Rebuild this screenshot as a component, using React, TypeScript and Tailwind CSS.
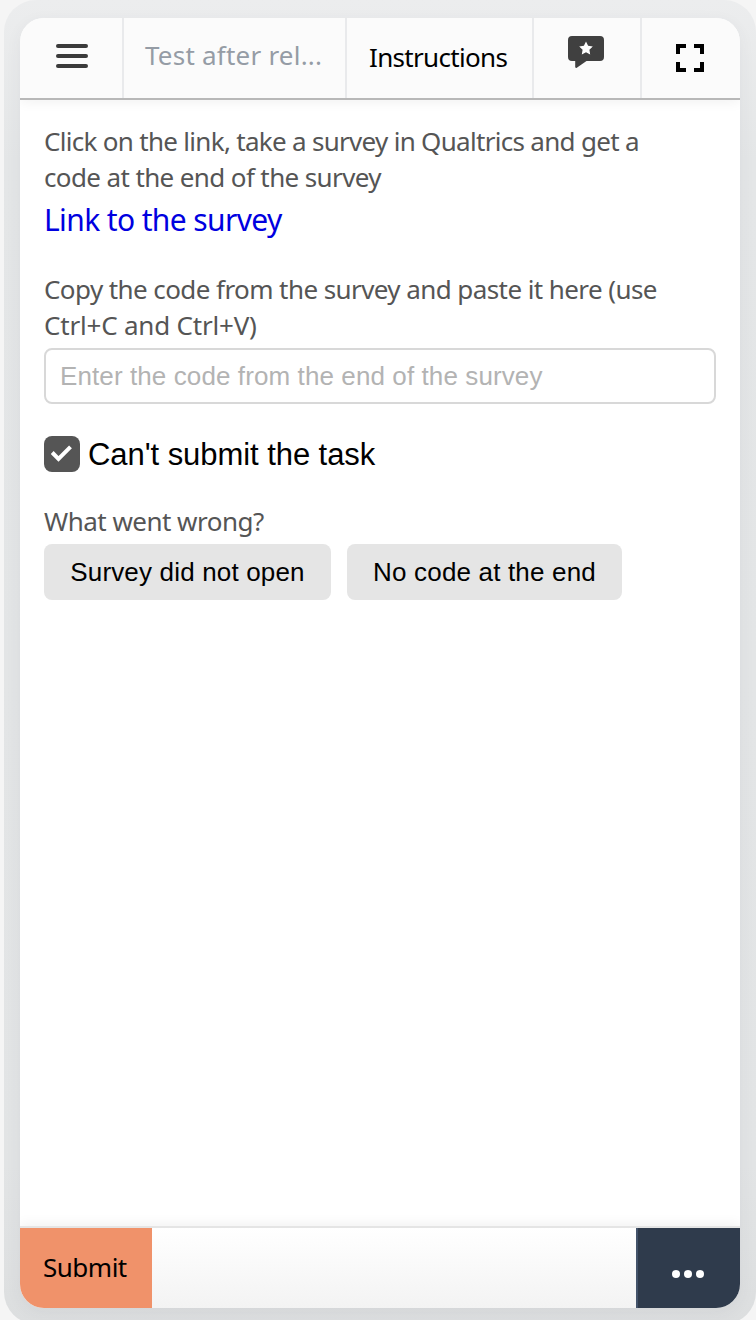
import React from "react";

function MenuIcon() {
  return (
    <svg width="32" height="24" viewBox="0 0 32 24" fill="#3b3b3b">
      <rect width="32" height="4" rx="2" />
      <rect y="10" width="32" height="4" rx="2" />
      <rect y="20" width="32" height="4" rx="2" />
    </svg>
  );
}

function FeedbackIcon() {
  return (
    <svg width="36" height="32" viewBox="0 0 36 32" fill="#404040">
      <path d="M4 0h28a4 4 0 0 1 4 4v17a4 4 0 0 1-4 4H18.500L8.800 31.700a1 1 0 0 1-1.600-.8V25H4a4 4 0 0 1-4-4V4a4 4 0 0 1 4-4z" />
      <path
        fill="#fff"
        d="M18 5.400l2.100 4.400 4.700.7-3.400 3.300.8 4.700-4.200-2.200-4.200 2.200.8-4.700-3.400-3.300 4.700-.7z"
      />
    </svg>
  );
}

function FullscreenIcon() {
  return (
    <svg width="28" height="28" viewBox="0 0 28 28" fill="none" stroke="#000" strokeWidth="4">
      <path d="M2 10V2h8M18 2h8v8M26 18v8h-8M10 26H2v-8" />
    </svg>
  );
}

const sans = "font-['Noto_Sans','Open_Sans',sans-serif]";
const arial = "font-['Liberation_Sans',Arial,sans-serif]";

export default function App() {
  return (
    <div className={`h-[1320px] w-[756px] overflow-hidden bg-[#f5f5f5] pl-1 ${sans}`}>
      <div className="h-[1324px] w-[752px] rounded-[32px] bg-[linear-gradient(#ecedee,#e4e6e7_12%,#e2e4e5_88%,#dcdedf)] pl-4 pt-[18px]">
        <div className="flex h-[1290px] w-[720px] flex-col overflow-hidden rounded-[24px] bg-white shadow-[0_4px_16px_rgba(60,70,80,0.06)]">
          <header className="relative flex h-[82px] shrink-0 border-b-2 border-[#b8b8b8] bg-[#fbfbfb] shadow-[0_2px_12px_rgba(0,0,0,0.06)]">
            <button className="flex w-[104px] items-start justify-center border-r-2 border-[#e9eaec] pl-[2px] pt-[26px]">
              <MenuIcon />
            </button>
            <div className="w-[223px] whitespace-nowrap border-r-2 border-[#e9eaec] pl-[21px] pt-[19px] text-[26px] leading-[36px] tracking-[0.22px] text-[#959ca5]">
              Test after rel...
            </div>
            <button className="flex w-[187px] items-start border-r-2 border-[#e9eaec] pl-[22px] pt-[21px] text-[26px] leading-[36px] tracking-[-0.68px] text-black">
              Instructions
            </button>
            <button className="flex w-[108px] items-start justify-center border-r-2 border-[#e9eaec] pr-[2px] pt-[18px]">
              <FeedbackIcon />
            </button>
            <button className="flex w-[98px] items-start justify-center pr-[2px] pt-[26px]">
              <FullscreenIcon />
            </button>
          </header>

          <main className="flex flex-1 flex-col items-start px-6 pt-[23px]">
            <p className="whitespace-nowrap text-[26px] leading-[36px] text-[#555]">
              <span className="tracking-[-0.7px]">Click on the link, take a survey in Qualtrics and get a</span>
              <br />
              <span className="tracking-[-0.62px]">code at the end of the survey</span>
            </p>
            <a href="#survey" className="mt-[5px] text-[30px] leading-[40px] tracking-[-0.62px] text-[#0000e0]">
              Link to the survey
            </a>
            <label htmlFor="code" className="mt-[31px] whitespace-nowrap text-[26px] leading-[36px] text-[#555]">
              <span className="tracking-[-0.58px]">Copy the code from the survey and paste it here (use</span>
              <br />
              <span className="tracking-[-0.2px]">Ctrl+C and Ctrl+V)</span>
            </label>
            <input
              id="code"
              className={`mt-[5px] h-14 w-full rounded-lg border-2 border-[#d8d8d8] bg-white px-[14px] text-[26px] tracking-[0.1px] outline-none placeholder:text-[#b3b3b3] ${arial}`}
              placeholder="Enter the code from the end of the survey"
            />
            <div className="mt-8 flex h-9 items-center gap-2">
              <div className="flex size-9 items-center justify-center rounded-lg bg-[#555]">
                <svg width="22" height="18" viewBox="0 0 22 18" fill="none" stroke="#fff" strokeWidth="4">
                  <path d="M1.200 7.500l6.300 6.300L19.500 1.800" />
                </svg>
              </div>
              <span className={`whitespace-nowrap pt-[2px] text-[31px] leading-9 tracking-[-0.06px] text-black ${arial}`}>
                Can't submit the task
              </span>
            </div>
            <p className="mt-[31px] text-[26px] leading-[36px] tracking-[-0.52px] text-[#555]">What went wrong?</p>
            <div className={`mt-[5px] flex gap-4 text-[26px] tracking-[0.17px] text-black ${arial}`}>
              <button className="h-14 w-[287px] whitespace-nowrap rounded-lg bg-[#e5e5e5]">Survey did not open</button>
              <button className="h-14 w-[275px] whitespace-nowrap rounded-lg bg-[#e5e5e5]">No code at the end</button>
            </div>
          </main>

          <footer className="flex h-[82px] shrink-0 border-t-2 border-[#e5e5e5] bg-[linear-gradient(#fff,#f3f3f3)] shadow-[0_-2px_12px_rgba(0,0,0,0.06)]">
            <button className="flex w-[132px] items-center bg-[#f0926a] pb-[2px] pl-[23px] text-[26px] tracking-[-0.5px] text-black">
              Submit
            </button>
            <div className="flex-1" />
            <button className="flex w-[104px] items-start justify-center border-l-2 border-[#43536a] bg-[#2f3b4c] pr-[2px] pt-[42px]">
              <svg width="32" height="8" viewBox="0 0 32 8" fill="#fff">
                <circle cx="4" cy="4" r="4" />
                <circle cx="16" cy="4" r="4" />
                <circle cx="28" cy="4" r="4" />
              </svg>
            </button>
          </footer>
        </div>
      </div>
    </div>
  );
}
